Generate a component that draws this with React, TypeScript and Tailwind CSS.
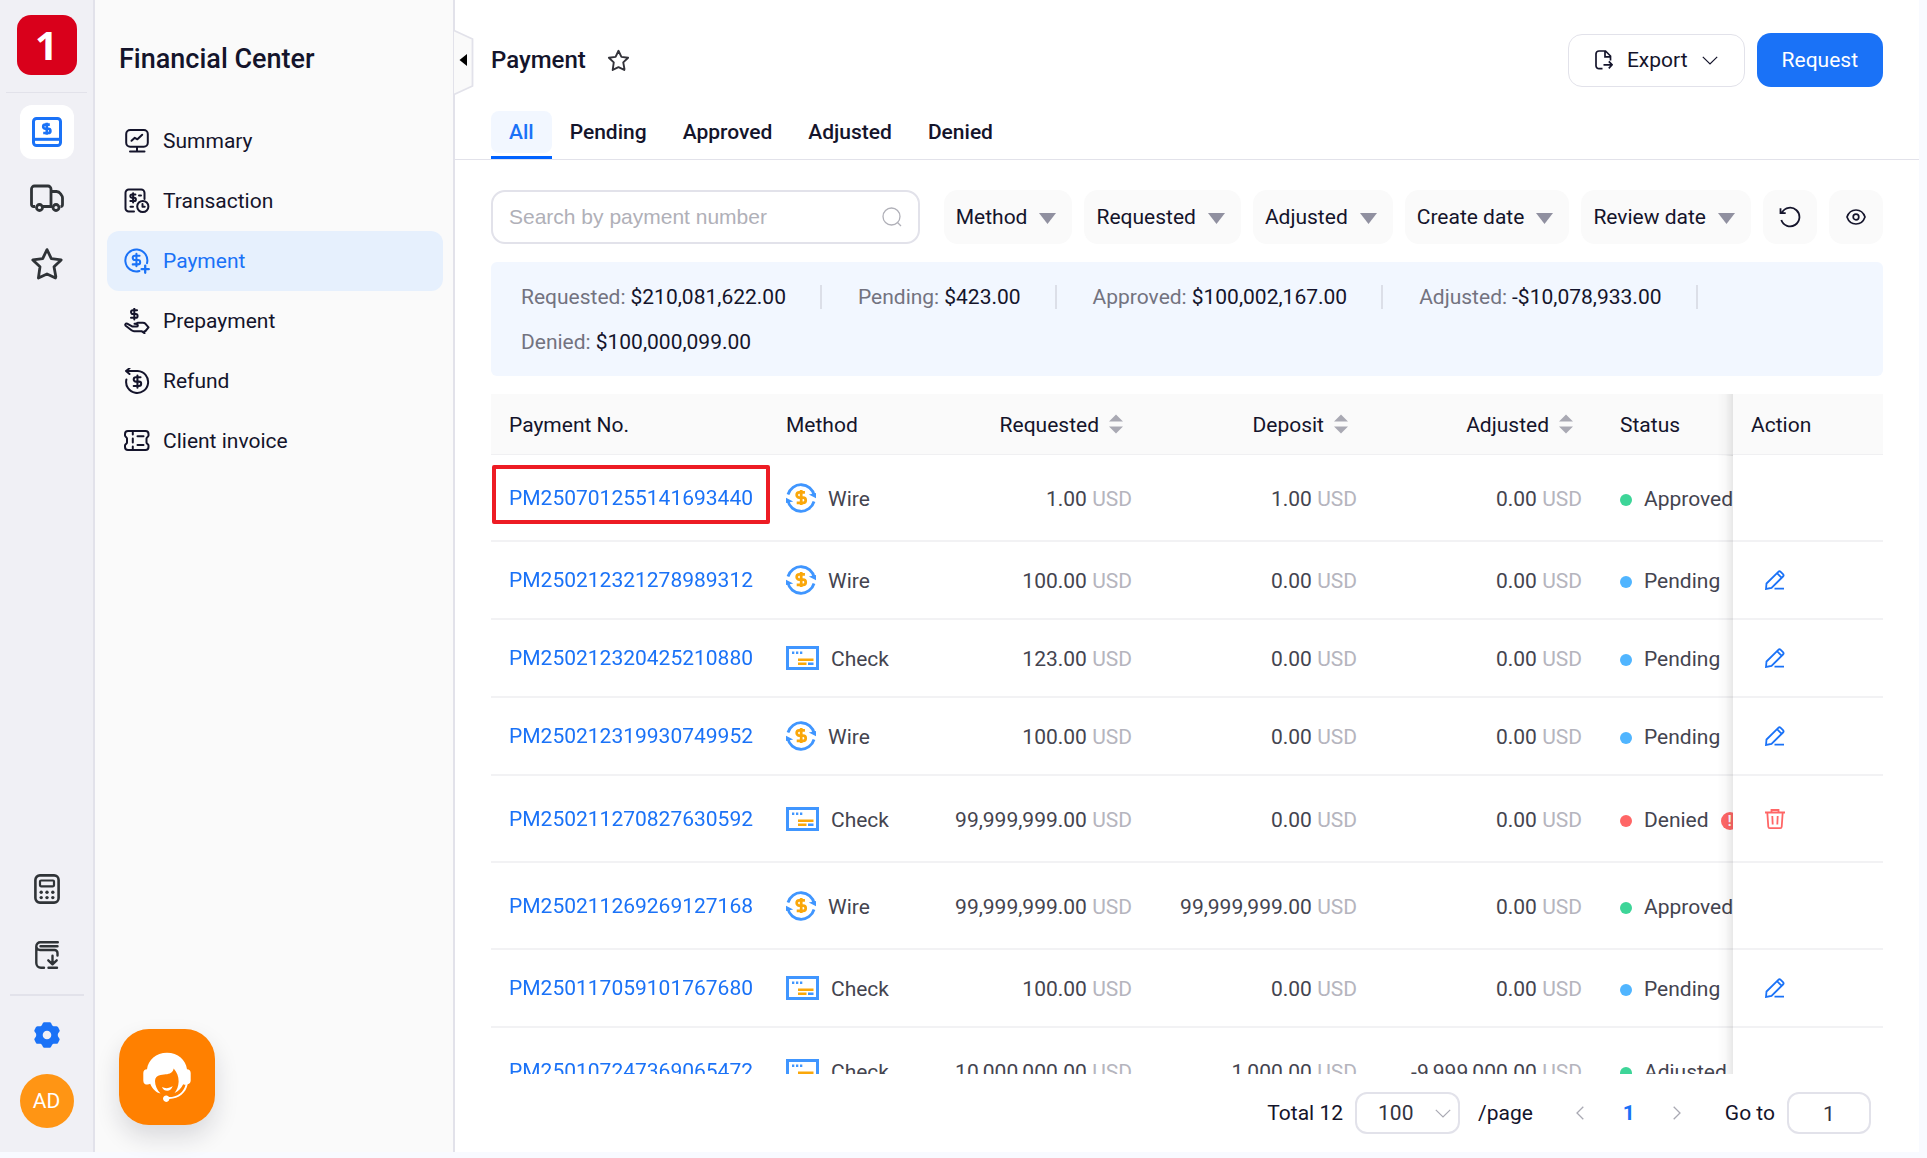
import React, { useState } from 'react';

type IconProps = { className?: string };
type Method = 'Wire' | 'Check';
type Status = 'Approved' | 'Pending' | 'Denied' | 'Adjusted';

interface PaymentRow {
  id: string;
  method: Method;
  requested: string;
  deposit: string;
  adjusted: string;
  status: Status;
  tall?: boolean;
}

const DOLLAR = 'M17 5H9.5a3.5 3.5 0 0 0 0 7h5a3.5 3.5 0 0 1 0 7H6M12 2v20';

const rows: PaymentRow[] = [
  { id: 'PM250701255141693440', method: 'Wire', requested: '1.00', deposit: '1.00', adjusted: '0.00', status: 'Approved', tall: true },
  { id: 'PM250212321278989312', method: 'Wire', requested: '100.00', deposit: '0.00', adjusted: '0.00', status: 'Pending' },
  { id: 'PM250212320425210880', method: 'Check', requested: '123.00', deposit: '0.00', adjusted: '0.00', status: 'Pending' },
  { id: 'PM250212319930749952', method: 'Wire', requested: '100.00', deposit: '0.00', adjusted: '0.00', status: 'Pending' },
  { id: 'PM250211270827630592', method: 'Check', requested: '99,999,999.00', deposit: '0.00', adjusted: '0.00', status: 'Denied', tall: true },
  { id: 'PM250211269269127168', method: 'Wire', requested: '99,999,999.00', deposit: '99,999,999.00', adjusted: '0.00', status: 'Approved', tall: true },
  { id: 'PM250117059101767680', method: 'Check', requested: '100.00', deposit: '0.00', adjusted: '0.00', status: 'Pending' },
  { id: 'PM250107247369065472', method: 'Check', requested: '10,000,000.00', deposit: '1,000.00', adjusted: '-9,999,000.00', status: 'Adjusted', tall: true },
];

const statusColor: Record<Status, string> = {
  Approved: 'bg-[#3dd598]',
  Adjusted: 'bg-[#3dd598]',
  Pending: 'bg-[#50b5ff]',
  Denied: 'bg-[#ff6666]',
};

const totals = [
  { label: 'Requested:', value: '$210,081,622.00' },
  { label: 'Pending:', value: '$423.00' },
  { label: 'Approved:', value: '$100,002,167.00' },
  { label: 'Adjusted:', value: '-$10,078,933.00' },
  { label: 'Denied:', value: '$100,000,099.00' },
];

const tabs = ['All', 'Pending', 'Approved', 'Adjusted', 'Denied'];
const filters = ['Method', 'Requested', 'Adjusted', 'Create date', 'Review date'];

/* Icons */
const FinanceIcon = () => (
  <svg viewBox="0 0 30 30" className="size-[30px]" fill="none" stroke="currentColor" strokeWidth="3">
    <rect x="1.5" y="1.5" width="27" height="27" rx="3" />
    <path d="M2 22.3h26" />
    <path d={DOLLAR} transform="translate(7.6 4.6) scale(.6)" strokeWidth="4.4" />
  </svg>
);

const TruckIcon = () => (
  <svg viewBox="0 0 34 28" className="h-7 w-[34px]" fill="none" stroke="currentColor" strokeWidth="2.8" strokeLinejoin="round">
    <path d="M5 22.5H3.5a2 2 0 0 1-2-2V5a3 3 0 0 1 3-3H18a3 3 0 0 1 3 3v17.500H13M21 7.500h5.500a5 5 0 0 1 4 2.200l1.200 1.800a4 4 0 0 1 .8 2.500V20.500a2 2 0 0 1-2 2M12.500 22.500H22" />
    <circle cx="9.500" cy="23.500" r="3" />
    <circle cx="26" cy="23.500" r="3" />
  </svg>
);

const StarIcon = ({ className }: IconProps) => (
  <svg viewBox="0 0 34 34" className={className} fill="none" stroke="currentColor" strokeWidth="2.800" strokeLinejoin="round">
    <path d="M17 2.600l4.300 9 9.900 1.300-7.200 6.900 1.800 9.800-.3 1.400L17 26.900l-8.600 4.100.2-1.400 1.400-9.800-7.200-6.900 9.900-1.300z" />
  </svg>
);

const CalculatorIcon = () => (
  <svg viewBox="0 0 26 30" className="h-[30px] w-[26px]" fill="none" stroke="currentColor" strokeWidth="2.600">
    <rect x="1.400" y="1.400" width="23.200" height="27.200" rx="4.500" />
    <rect x="6" y="6.500" width="14" height="5.800" rx="1" strokeWidth="2.200" />
    {[18.3, 23.6].map((y) =>
      [7.2, 13, 18.8].map((x) => <circle key={`${x}-${y}`} cx={x} cy={y} r="1.700" fill="currentColor" stroke="none" />)
    )}
  </svg>
);

const BookDownIcon = () => (
  <svg viewBox="0 0 24 28" className="h-7 w-6" fill="none" stroke="currentColor" strokeWidth="2.400" strokeLinecap="round" strokeLinejoin="round">
    <path d="M22.800 1.300H5.500a4 4 0 0 0-4.200 4V22a4.700 4.700 0 0 0 4.700 4.700h3M1.300 5.500A3.700 3.700 0 0 0 5 9h14.500a3 3 0 0 1 3 3v2.500M5.500 5.200h17" />
    <path d="M17.500 14.800v8M13.300 19.300l4.200 4 4.200-4M13.500 26.700h8.500" />
  </svg>
);

const GearIcon = () => (
  <svg viewBox="0 0 26 26" className="size-[26px]">
    <path
      fill="currentColor"
      fillRule="evenodd"
      d="M10.200.3h5.600c1.200 0 1.500 1.400 2.200 2.700.5 1 1.500 1.400 2.700 1.300 1.300-.1 2.700-.2 3.300.8l1.500 3c.6 1.100-.5 2-1.200 3-.7 1.100-.7 2.700 0 3.800.7 1 1.800 1.900 1.200 3l-1.500 3c-.6 1-2 .9-3.300.8-1.200-.1-2.200.3-2.700 1.300-.7 1.300-1 2.700-2.200 2.700h-5.600C9 25.700 8.700 24.300 8 23c-.5-1-1.500-1.400-2.700-1.300-1.300.1-2.700.2-3.300-.8l-1.500-3c-.6-1.100.5-2 1.200-3 .7-1.100.7-2.700 0-3.800-.7-1-1.800-1.900-1.200-3l1.500-3c.6-1 2-.9 3.300-.8C6.500 4.400 7.500 4 8 3 8.700 1.700 9 .3 10.200.3zM13 8.700a4.300 4.300 0 1 0 0 8.600 4.300 4.300 0 0 0 0-8.600z"
    />
  </svg>
);

const navSvg = {
  viewBox: '0 0 26 26',
  className: 'size-[26px] shrink-0',
  fill: 'none',
  stroke: 'currentColor',
  strokeWidth: 2,
  strokeLinecap: 'round' as const,
  strokeLinejoin: 'round' as const,
};

const SummaryIcon = () => (
  <svg {...navSvg}>
    <rect x="2.200" y="2" width="21.600" height="16.800" rx="4" />
    <path d="M7.500 12.800l3.300-3 2.600 1.500 4.800-4.500M13 19v4M6 23.600h14.500" />
  </svg>
);

const TransactionIcon = () => (
  <svg {...navSvg}>
    <path d="M10 23.500H4.800a3.300 3.300 0 0 1-3.300-3.300V4.800a3.300 3.300 0 0 1 3.300-3.300h12.400a3.300 3.300 0 0 1 3.300 3.300V11" />
    <path d={DOLLAR} transform="translate(3.600 4.300) scale(.46)" strokeWidth="4.400" />
    <path d="M15 7.500h2M6.500 18.800h2.500" />
    <circle cx="18.800" cy="18.500" r="5.600" />
    <path d="M18.500 16v2.800h2.200" />
  </svg>
);

const PaymentIcon = () => (
  <svg {...navSvg}>
    <path d="M23 15.200A11 11 0 1 0 15.500 23" />
    <path d={DOLLAR} transform="translate(5 4.600) scale(.62)" strokeWidth="3.300" />
    <path d="M21.200 17.600v7.200M17.600 21.200h7.200" strokeWidth="2.300" />
  </svg>
);

const PrepaymentIcon = () => (
  <svg {...navSvg}>
    <path d={DOLLAR} transform="translate(3.700 -.6) scale(.55)" strokeWidth="3.600" />
    <path d="M20.500 25.200l-3-2H10c-1 0-1.700-.3-2.500-.9l-5.800-4.500c-1-1-.2-2.700 1.500-2.200l5.300 3h4c1.800 0 1.800-2.400 0-2.600l-2-.2M12 15.600l2-.8h4.800c1 0 2 .3 2.700 1l3 3.600-3 3.600-1 .2" />
  </svg>
);

const RefundIcon = () => (
  <svg {...navSvg}>
    <path d="M2.400 11.500A11 11 0 1 0 13.800 3H2.200M5.500.3L2 3l3.500 3" />
    <path d={DOLLAR} transform="translate(6 6.200) scale(.62)" strokeWidth="3.300" />
  </svg>
);

const InvoiceIcon = () => (
  <svg {...navSvg}>
    <path d="M4 3h17.500a3 3 0 0 1 3 3v1.500c0 1.200-2 1.700-2 3v4c0 1.300 2 1.800 2 3V19a3 3 0 0 1-3 3H4a3 3 0 0 1-3-3v-1.500c0-1.200 2-1.700 2-3v-4c0-1.300-2-1.800-2-3V6a3 3 0 0 1 3-3z" />
    <path d="M8.800 4.500v2M8.800 10.500v4M8.800 18.500v2M13.500 8.300h6M13.500 17h6" />
  </svg>
);

const WireIcon = () => (
  <svg viewBox="0 0 30 30" className="size-[30px] shrink-0" fill="none">
    <path d="M2 11.500A13.500 13.500 0 0 1 28.200 12.500M28 18.500A13.500 13.500 0 0 1 1.800 17.500" stroke="#4096ff" strokeWidth="2.800" />
    <path d="M22.800 11.600L30 15.200V10z M7.200 18.400L0 14.800V20z" fill="#4096ff" />
    <path d={DOLLAR} transform="translate(6.200 5.600) scale(.75)" stroke="#faa70a" strokeWidth="3.700" />
  </svg>
);

const CheckIcon = () => (
  <svg viewBox="0 0 33 24" className="h-6 w-[33px] shrink-0" fill="none">
    <rect x="1.500" y="1.500" width="30" height="21" stroke="#4096ff" strokeWidth="3" />
    <path d="M6 6.800h2.300M10 6.800h2.300M14 6.800h2.300M22 17.800h5.500" stroke="#4096ff" strokeWidth="2.400" />
    <path d="M12 13.800h15.500M12 17.800h8.500" stroke="#faa70a" strokeWidth="2.600" />
  </svg>
);

const EditIcon = () => (
  <svg viewBox="0 0 20 20" className="size-5" fill="none" stroke="currentColor" strokeWidth="1.800">
    <path d="M1 19l.5-5.500L13.300 1.800a1.700 1.700 0 0 1 2.400 0l2.300 2.300a1.700 1.700 0 0 1 0 2.400L6.500 18zM12 3.200l4.700 4.700M9.500 18.700H19" />
  </svg>
);

const TrashIcon = () => (
  <svg viewBox="0 0 20 20" className="size-5" fill="none" stroke="currentColor" strokeWidth="1.800">
    <path d="M0 3.500h20M6.500 3.500V1h7v2.500M2.300 3.500l1 14.200a1.500 1.500 0 0 0 1.500 1.400h10.400a1.500 1.500 0 0 0 1.500-1.400l1-14.200M7.300 7l.4 8.500M12.700 7l-.4 8.500" />
  </svg>
);

const HeadsetIcon = () => (
  <svg viewBox="0 0 48 50" className="h-[50px] w-12" fill="#fff">
    <path d="M24 .8C13 .8 5.200 8 4 17.300c-2.300.2-3.700 1.500-3.700 3.700v7.700c0 2.500 1.800 3.900 4.200 3.900 1 0 1.900-.3 2.700-.8C9.500 37 13.300 41 17.500 41.500c-3.500-3.500-5.500-8.500-5.500-12.500 0-3.200 2-5.300 5.500-6 5-.8 9-.5 11.500-3 .9-1 1.400-2 1.700-3.500 3.500 4 5.100 8.500 4.900 13.500-.2 4-1.600 8-4 11 3.700-1.800 6.800-4.800 8.600-8.800.8.400 1.500.5 2.300.5-1.700 7.500-8 12.300-16.500 12.400a3.200 3.200 0 1 0 .4 2C36 46.500 43 41 44.700 32.300c1.900-.5 3-1.800 3-3.700V21c0-2.200-1.500-3.500-3.700-3.700C42.800 8 35 .8 24 .8z" />
    <path d="M19 35c3 1.800 7.500 1.500 10.600-1C28.500 40 21 40.500 19 35z" />
  </svg>
);

const ChevronDown = ({ className }: IconProps) => (
  <svg viewBox="0 0 16 9" className={className} fill="none" stroke="currentColor" strokeWidth="1.200">
    <path d="M.8.800L8 8 15.200.8" />
  </svg>
);

const Caret = () => (
  <svg viewBox="0 0 17 11" className="h-[11px] w-[17px]" fill="#9090a0">
    <path d="M0 0h17L8.500 11z" />
  </svg>
);

const SortIcon = () => (
  <svg viewBox="0 0 14 20" className="h-5 w-[14px]" fill="#a9a9b3">
    <path d="M0 7.500h14L7 .5z M0 12.500h14L7 19.500z" />
  </svg>
);

const navItems = [
  { label: 'Summary', icon: SummaryIcon },
  { label: 'Transaction', icon: TransactionIcon },
  { label: 'Payment', icon: PaymentIcon },
  { label: 'Prepayment', icon: PrepaymentIcon },
  { label: 'Refund', icon: RefundIcon },
  { label: 'Client invoice', icon: InvoiceIcon },
];

const Rail = () => (
  <nav aria-label="Modules" className="flex w-[95px] shrink-0 flex-col items-center border-r-2 border-[#e2e2ea] bg-[#f0f0f5] pt-[15px] pb-6 text-[#2f3337]">
    <a href="#home" className="flex size-[60px] items-center justify-center rounded-[14px] bg-[#d9001b] font-['Open_Sans'] text-[40px] leading-none font-bold text-white">
      1
    </a>
    <div className="mt-[17px] mb-3 h-px w-[81px] bg-[#e2e2ea]" />
    <div className="flex flex-col gap-3">
      <button aria-label="Finance" className="flex size-[54px] items-center justify-center rounded-xl bg-white text-[#1a72f7]">
        <FinanceIcon />
      </button>
      <button aria-label="Shipments" className="flex size-[54px] items-center justify-center">
        <TruckIcon />
      </button>
      <button aria-label="Favorites" className="flex size-[54px] items-center justify-center">
        <StarIcon className="size-[34px]" />
      </button>
    </div>
    <div className="mt-auto flex flex-col gap-3">
      <button aria-label="Calculator" className="flex size-[54px] items-center justify-center">
        <CalculatorIcon />
      </button>
      <button aria-label="Downloads" className="flex size-[54px] items-center justify-center">
        <BookDownIcon />
      </button>
    </div>
    <div className="my-3 h-0.5 w-[74px] bg-[#e2e2ea]" />
    <div className="flex flex-col gap-3">
      <button aria-label="Settings" className="flex size-[54px] items-center justify-center text-[#1a72f7]">
        <GearIcon />
      </button>
      <button className="size-[54px] rounded-full bg-[#ff9514] pt-0.5 text-[21px] text-white">AD</button>
    </div>
  </nav>
);

const Sidebar = () => (
  <aside className="relative w-[360px] shrink-0 border-r-2 border-[#e2e2ea] bg-[#fafafa]">
    <h2 className="px-6 pt-[39px] pb-8 text-[27px] leading-10 font-medium">Financial Center</h2>
    <nav aria-label="Financial Center" className="pr-2.5 pl-3">
      {navItems.map(({ label, icon: Icon }) => (
        <a
          key={label}
          href="#nav"
          className={`flex h-[60px] items-center gap-[13px] rounded-xl pl-[17px] text-[21px] ${label === 'Payment' ? 'bg-[#e6f0fd] text-[#1a72f7]' : ''}`}
        >
          <Icon />
          <span className="pt-0.5">{label}</span>
        </a>
      ))}
    </nav>
    <button aria-label="Collapse menu" className="absolute top-[29px] left-full z-20">
      <svg viewBox="0 0 21 67" className="h-[67px] w-[21px]">
        <path d="M1 1.500l18.500 8.500v47L1 65.500" fill="#fafafa" stroke="#e2e2ea" strokeWidth="1.800" />
        <path d="M14 25v12L6.500 31z" fill="#000" />
      </svg>
    </button>
    <button
      aria-label="Support"
      className="absolute bottom-[27px] left-6 flex size-24 items-center justify-center rounded-[30px] bg-[#ff8000] shadow-[0_12px_24px_rgba(20,20,43,0.14)]"
    >
      <HeadsetIcon />
    </button>
  </aside>
);

const Amount = ({ value }: { value: string }) => (
  <td className="pt-1 pr-4 text-right whitespace-nowrap">
    {value} <span className="text-[#b5b5be]">USD</span>
  </td>
);

const PaymentTable = () => (
  <div className="min-h-0 flex-1 overflow-auto [scrollbar-width:none]">
    <table className="w-full min-w-[1440px] table-fixed border-separate border-spacing-0 text-left text-[21px]">
      <colgroup>
        <col className="w-[277px]" />
        <col className="w-[155px]" />
        <col className="w-[225px]" />
        <col className="w-[225px]" />
        <col className="w-[225px]" />
        <col />
        <col className="w-[150px]" />
      </colgroup>
      <thead>
        <tr className="h-[61px] [&>th]:border-b [&>th]:border-[#f0f0f2] [&>th]:bg-[#fafafa] [&>th]:pt-1 [&>th]:font-normal">
          <th className="pl-[18px]">Payment No.</th>
          <th className="pl-[18px]">Method</th>
          {['Requested', 'Deposit', 'Adjusted'].map((h) => (
            <th key={h} className="pr-[25px]">
              <button className="ml-auto flex items-center gap-2.5">
                {h}
                <span className="pb-1">
                  <SortIcon />
                </span>
              </button>
            </th>
          ))}
          <th className="pl-[22px]">Status</th>
          <ActionCell as="th">Action</ActionCell>
        </tr>
      </thead>
      <tbody className="text-[#44444f]">
        {rows.map((row, i) => (
          <tr key={row.id} className={`${row.tall ? 'h-[87px]' : 'h-[78px]'} [&>td]:border-b-2 [&>td]:border-[#f2f2f4]`}>
            <td className="relative pt-0.5 pl-[18px]">
              <a href="#payment" className="text-[#1a72f7]">{row.id}</a>
              {i === 0 && <span className="pointer-events-none absolute top-[10px] -right-0.5 left-px z-10 h-[59px] rounded-xs border-4 border-[#ed1c24]" />}
            </td>
            <td className="pl-[18px]">
              <span className="flex items-center gap-3">
                {row.method === 'Wire' ? <WireIcon /> : <CheckIcon />}
                <span className="pt-1">{row.method}</span>
              </span>
            </td>
            <Amount value={row.requested} />
            <Amount value={row.deposit} />
            <Amount value={row.adjusted} />
            <td className="pt-1 pl-[22px]">
              <span className="flex items-center gap-3">
                <span className={`size-3 shrink-0 rounded-full ${statusColor[row.status]}`} />
                {row.status}
                {row.status === 'Denied' && (
                  <span className="flex size-[18px] shrink-0 items-center justify-center rounded-full bg-[#ff6666] text-sm font-bold text-white">!</span>
                )}
              </span>
            </td>
            <ActionCell as="td">
              {row.status === 'Pending' && (
                <button aria-label="Edit" className="ml-3.5 flex text-[#1a72f7]">
                  <EditIcon />
                </button>
              )}
              {row.status === 'Denied' && (
                <button aria-label="Delete" className="ml-3.5 flex text-[#ff6666]">
                  <TrashIcon />
                </button>
              )}
            </ActionCell>
          </tr>
        ))}
      </tbody>
    </table>
  </div>
);

// Pinned to the right edge, with a fading shadow over the scrolled columns
const ActionCell = ({ as: Tag, children }: { as: 'td' | 'th'; children?: React.ReactNode }) => (
  <Tag className="sticky right-0 bg-white pl-[18px] before:absolute before:top-0 before:right-full before:-bottom-0.5 before:w-4 before:bg-linear-to-l before:from-black/9 before:via-black/2 before:to-transparent">
    {children}
  </Tag>
);

const Pager = () => (
  <footer className="flex h-[42px] shrink-0 items-center justify-end pr-3 text-[21px]">
    <label htmlFor="page-size" className="mr-3 pt-0.5">Total 12</label>
    <div className="relative mr-[18px]">
      <select id="page-size" defaultValue="100" className="h-[42px] w-[105px] appearance-none rounded-xl border-2 border-[#e2e2ea] bg-white pt-0.5 pl-[21px] text-[#33333f]">
        <option>100</option>
        <option>50</option>
      </select>
      <ChevronDown className="pointer-events-none absolute top-[17px] right-[9px] h-[9px] w-4 text-[#a9a9b3]" />
    </div>
    <span className="pt-0.5">/page</span>
    <button aria-label="Previous page" className="ml-[26px] flex w-[42px] justify-center text-[#a9a9b3]">
      <svg viewBox="0 0 8 14" className="h-[14px] w-2" fill="none" stroke="currentColor" strokeWidth="1.300">
        <path d="M7.300.7L1 7l6.300 6.300" />
      </svg>
    </button>
    <button className="mr-1.5 ml-[7px] w-[42px] pt-0.5 font-bold text-[#1a72f7]">1</button>
    <button aria-label="Next page" className="flex w-[42px] justify-center text-[#a9a9b3]">
      <svg viewBox="0 0 8 14" className="h-[14px] w-2" fill="none" stroke="currentColor" strokeWidth="1.300">
        <path d="M.7.7L7 7 .7 13.300" />
      </svg>
    </button>
    <label htmlFor="goto" className="mr-3 ml-[27px] pt-0.5">Go to</label>
    <input id="goto" defaultValue="1" className="h-[42px] w-[84px] rounded-xl border-2 border-[#e2e2ea] pt-0.5 text-center text-[#33333f]" />
  </footer>
);

export default function App() {
  const [tab, setTab] = useState('All');

  return (
    <div className="flex h-screen bg-[#f8faff] pr-2 pb-1.5 font-[Roboto,sans-serif] text-[#14142b]">
      <Rail />
      <Sidebar />
      <main className="flex min-w-0 flex-1 flex-col bg-white">
        <header className="border-b border-[#e2e2ea] px-9 pt-[33px]">
          <div className="flex items-center">
            <h1 className="text-2xl font-medium">Payment</h1>
            <button aria-label="Add to favorites" className="ml-[21px] text-[#33333a]">
              <StarIcon className="size-[23px]" />
            </button>
            <button className="ml-auto flex h-[53px] items-center rounded-[14px] border border-[#e2e2ea] px-[26px] text-[21px]">
              <svg viewBox="0 0 18 20" className="mr-3.5 h-5 w-[18px]" fill="none" stroke="currentColor" strokeWidth="1.700">
                <path d="M7.500 18.700H4a3 3 0 0 1-3-3V4a3 3 0 0 1 3-3h6.500L15.500 6v4.500M10 1v5.800h5.500M8.500 14.800h8.500M13.800 11.300l3.300 3.500-3.300 3.500" />
              </svg>
              <span className="pt-0.5">Export</span>
              <ChevronDown className="ml-3.5 h-[9px] w-4" />
            </button>
            <button className="ml-3 h-[54px] rounded-[14px] bg-[#1a72f7] px-[25px] pt-0.5 text-[21px] text-white">Request</button>
          </div>
          <div role="tablist" className="mt-6 flex text-[21px] font-medium">
            {tabs.map((t) => (
              <button
                key={t}
                role="tab"
                aria-selected={tab === t}
                onClick={() => setTab(t)}
                className={`border-b-3 pb-[3px] ${tab === t ? 'border-[#0062ff] text-[#1a72f7]' : 'border-transparent'}`}
              >
                <span className={`flex h-[42px] items-center rounded-lg px-[18px] pt-0.5 ${tab === t ? 'bg-[#f2f7ff]' : ''}`}>{t}</span>
              </button>
            ))}
          </div>
        </header>

        <section className="flex min-h-0 flex-1 flex-col gap-[18px] px-9 pt-[30px] pb-[18px]">
          <div className="flex gap-3">
            <label className="mr-3 flex h-[54px] flex-1 items-center rounded-[14px] border-2 border-[#e2e2ea] px-4">
              <input
                aria-label="Search by payment number"
                placeholder="Search by payment number"
                className="min-w-0 flex-1 font-['Liberation_Sans',sans-serif] text-[21px] outline-none placeholder:text-[#b0b0b8]"
              />
              <svg viewBox="0 0 20 20" className="size-5" fill="none" stroke="#b0b0b8" strokeWidth="1.300">
                <circle cx="9.500" cy="9.500" r="8.500" />
                <path d="M15.500 15.500l3.500 3.500" />
              </svg>
            </label>
            {filters.map((f) => (
              <button key={f} className="flex h-[54px] items-center gap-3 rounded-[14px] bg-[#fafafa] pr-4 pl-3 text-[21px]">
                <span className="pt-0.5">{f}</span>
                <span className="pt-0.5">
                  <Caret />
                </span>
              </button>
            ))}
            <button aria-label="Reset filters" className="flex size-[54px] items-center justify-center rounded-[14px] bg-[#fafafa]">
              <svg viewBox="0 0 22 22" className="size-[22px]" fill="none" stroke="currentColor" strokeWidth="1.800">
                <path d="M2.300 14A9.300 9.300 0 1 0 3 6.500M1.500 2.300v4.900h5.200" />
              </svg>
            </button>
            <button aria-label="Toggle columns" className="flex size-[54px] items-center justify-center rounded-[14px] bg-[#fafafa]">
              <svg viewBox="0 0 20 16" className="h-4 w-5" fill="none" stroke="currentColor" strokeWidth="1.700">
                <path d="M1 8c1.500-4.300 5-7 9-7s7.500 2.700 9 7c-1.500 4.300-5 7-9 7S2.500 12.300 1 8z" />
                <circle cx="10" cy="8" r="2.800" />
              </svg>
            </button>
          </div>

          <div className="flex flex-wrap gap-y-[21px] rounded-md bg-[#f2f7ff] px-[30px] pt-[23px] pb-[22px] text-[21px] leading-6">
            {totals.map(({ label, value }, i) => (
              <div key={label} className="flex">
                <span className="text-[#73737f]">{label}</span>
                <span className="ml-[5px]">{value}</span>
                {i < totals.length - 1 && <span className="mr-9 ml-[34px] w-0.5 bg-[#dcdfe8]" />}
              </div>
            ))}
          </div>

          <PaymentTable />
          <Pager />
        </section>
      </main>
    </div>
  );
}
